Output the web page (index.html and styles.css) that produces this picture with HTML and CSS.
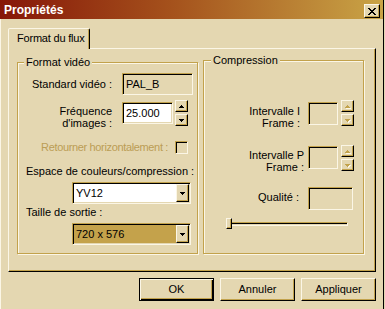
FILE: index.html
```html
<!DOCTYPE html>
<html lang="fr">
<head>
    <meta charset="UTF-8">
    <title>Propriétés</title>
    <link rel="stylesheet" href="styles.css">
</head>
<body>
    <div class="window">
        <div class="titlebar">
            <span class="title">Propriétés</span>
            <button class="close" aria-label="Fermer">
                <svg width="8" height="7" viewBox="0 0 8 7"><path d="M0 0h2v1h1v1h2V1h1V0h2v1H7v1H6v1H5v1h1v1h1v1h1v1H6V6H5V5H3v1H2v1H0V6h1V5h1V4h1V3H2V2H1V1H0z"/></svg>
            </button>
        </div>

        <div class="content">
            <div class="tabs">
                <div class="tab">Format du flux</div>
            </div>

            <div class="panel">
                <div class="group video">
                    <span class="legend">Format vidéo</span>

                    <div class="row row-std">
                        <span class="label lbl-std">Standard vidéo :</span>
                        <span class="sunken field-std">PAL_B</span>
                    </div>

                    <div class="row row-fps">
                        <span class="label lbl-fps">Fréquence<br>d'images :</span>
                        <span class="sunken field-fps">25.000</span>
                        <div class="spin">
                            <span class="raised spin-btn"><svg width="5" height="3"><path d="M2 0h1v1h1v1h1v1H0V2h1V1h1z"/></svg></span>
                            <span class="raised spin-btn"><svg width="5" height="3"><path d="M0 0h5v1H4v1H3v1H2V2H1V1H0z"/></svg></span>
                        </div>
                    </div>

                    <div class="row row-flip">
                        <span class="label lbl-flip">Retourner horizontalement :</span>
                        <span class="sunken check"></span>
                    </div>

                    <div class="label lbl-space">Espace de couleurs/compression :</div>
                    <div class="sunken combo combo-space">
                        <span class="combo-text">YV12</span>
                        <span class="raised combo-btn"><svg width="5" height="3"><path d="M0 0h5v1H4v1H3v1H2V2H1V1H0z"/></svg></span>
                    </div>

                    <div class="label lbl-size">Taille de sortie :</div>
                    <div class="sunken combo combo-size">
                        <span class="combo-text">720 x 576</span>
                        <span class="raised combo-btn"><svg width="5" height="3"><path d="M0 0h5v1H4v1H3v1H2V2H1V1H0z"/></svg></span>
                    </div>
                </div>

                <div class="group compression">
                    <span class="legend">Compression</span>

                    <div class="row row-iframe">
                        <span class="label lbl-iframe">Intervalle I<br>Frame :</span>
                        <span class="sunken field-small"></span>
                        <div class="spin disabled">
                            <span class="raised spin-btn"><svg width="5" height="3"><path d="M2 0h1v1h1v1h1v1H0V2h1V1h1z"/></svg></span>
                            <span class="raised spin-btn"><svg width="5" height="3"><path d="M0 0h5v1H4v1H3v1H2V2H1V1H0z"/></svg></span>
                        </div>
                    </div>

                    <div class="row row-pframe">
                        <span class="label lbl-pframe">Intervalle P<br>Frame :</span>
                        <span class="sunken field-small"></span>
                        <div class="spin disabled">
                            <span class="raised spin-btn"><svg width="5" height="3"><path d="M2 0h1v1h1v1h1v1H0V2h1V1h1z"/></svg></span>
                            <span class="raised spin-btn"><svg width="5" height="3"><path d="M0 0h5v1H4v1H3v1H2V2H1V1H0z"/></svg></span>
                        </div>
                    </div>

                    <div class="row row-quality">
                        <span class="label lbl-quality">Qualité :</span>
                        <span class="sunken field-quality"></span>
                    </div>

                    <div class="slider">
                        <span class="track"></span>
                        <span class="raised thumb"></span>
                    </div>
                </div>
            </div>

            <div class="actions">
                <button class="btn default">OK</button>
                <button class="btn">Annuler</button>
                <button class="btn">Appliquer</button>
            </div>
        </div>
    </div>
</body>
</html>
```

FILE: styles.css
```css
body {
    margin: 0;
    background: #e4d7b1;
    font-family: "Liberation Sans", Arial, sans-serif;
    font-size: 11px;
    line-height: 13px;
    color: #000;
}
.window {
    width: 384px;
    height: 309px;
    box-sizing: border-box;
    border-right: 1px solid #000;
    display: flex;
    flex-direction: column;
}

/* title bar */
.titlebar {
    height: 19px;
    flex: none;
    display: flex;
    align-items: flex-start;
    justify-content: space-between;
    background: linear-gradient(to right, #861608, #a5521c 45%, #c9a446);
    color: #fff;
}
.title {
    font-weight: bold;
    font-size: 12px;
    line-height: 17px;
    padding: 2px 0 0 4px;
}
.close {
    width: 16px;
    height: 14px;
    margin: 4px 3px 0 0;
    padding: 0;
    box-sizing: border-box;
    background: #e4d7b1;
    border: 1px solid;
    border-color: #fbf6e6 #000 #000 #fbf6e6;
    box-shadow: inset -1px -1px #c2a24c;
    display: flex;
    align-items: center;
    justify-content: center;
}

/* 3D borders */
.raised {
    box-sizing: border-box;
    background: #e4d7b1;
    border: 1px solid;
    border-color: #fbf6e6 #000 #000 #fbf6e6;
    box-shadow: inset -1px -1px #c2a24c;
}
.sunken {
    box-sizing: border-box;
    border: 1px solid;
    border-color: #c2a24c #fbf6e6 #fbf6e6 #c2a24c;
    box-shadow: inset 1px 1px #000, inset -1px -1px #e4d7b1;
}

.content {
    flex: 1;
    border-left: 1px solid #fbf6e6;
    padding: 9px 7px 0 7px;
}

/* tab control */
.tabs {
    display: flex;
    height: 20px;
}
.tab {
    width: 82px;
    height: 21px;
    box-sizing: border-box;
    padding: 3px 0 0 8px;
    letter-spacing: -0.2px;
    background: #e4d7b1;
    border: 1px solid;
    border-bottom: none;
    border-color: #fbf6e6 #000 transparent #fbf6e6;
    border-radius: 2px 2px 0 0;
    box-shadow: inset -1px 0 #c2a24c;
    position: relative;
    z-index: 1;
}
.panel {
    width: 368px;
    height: 224px;
    box-sizing: border-box;
    padding-left: 8px;
    border: 1px solid;
    border-color: #fbf6e6 #000 #000 #fbf6e6;
    box-shadow: inset -1px -1px #c2a24c;
    display: flex;
    align-items: flex-start;
    gap: 5px;
}

/* group boxes */
.group {
    box-sizing: border-box;
    border: 1px solid #c2a24c;
    box-shadow: inset 1px 1px #fbf6e6, 1px 1px #fbf6e6;
}
.video {
    width: 181px;
    height: 192px;
    margin-top: 13px;
}
.compression {
    width: 161px;
    height: 194px;
    margin-top: 11px;
}
.legend {
    display: block;
    width: fit-content;
    margin: -7px 0 0 6px;
    padding: 0 2px;
    background: #e4d7b1;
}
.compression .legend {
    margin-left: 7px;
}

.row {
    display: flex;
    align-items: flex-start;
}
.label {
    white-space: nowrap;
}

/* format video */
.row-std {
    margin-top: 4px;
}
.lbl-std {
    width: 94px;
    text-align: right;
    line-height: 22px;
}
.field-std {
    width: 71px;
    height: 22px;
    margin-left: 10px;
    padding: 0 3px;
    line-height: 20px;
}
.row-fps {
    margin-top: 5px;
}
.lbl-fps {
    width: 94px;
    margin-top: 5px;
    text-align: right;
    line-height: 12px;
}
.field-fps {
    width: 51px;
    height: 22px;
    margin: 2px 0 0 10px;
    padding: 0 3px;
    line-height: 20px;
    background: #fff;
}
.spin {
    display: flex;
    flex-direction: column;
    gap: 2px;
    margin-left: 2px;
}
.row-iframe .spin,
.row-pframe .spin {
    margin-left: 3px;
}
.spin-btn {
    width: 13px;
    height: 12px;
    display: flex;
    align-items: center;
    justify-content: center;
}
.spin.disabled svg {
    fill: #c2a24c;
    filter: drop-shadow(1px 1px 0 #fbf6e6);
}
.row-flip {
    margin-top: 12px;
}
.lbl-flip {
    width: 150px;
    text-align: right;
    letter-spacing: -0.35px;
    color: #bb9d55;
}
.check {
    width: 13px;
    height: 13px;
    margin-left: 7px;
}
.lbl-space {
    margin: 11px 0 0 8px;
}
.lbl-size {
    margin: 2px 0 0 8px;
}
.combo {
    display: flex;
    width: 119px;
    height: 22px;
    margin: 4px 0 0 54px;
    padding: 1px;
    background: #fff;
}
.combo-size {
    background: #c4a24b;
}
.combo-text {
    flex: 1;
    padding-left: 2px;
    line-height: 18px;
}
.combo-btn {
    width: 13px;
    height: 18px;
    display: flex;
    align-items: center;
    justify-content: center;
}

/* compression */
.row-iframe {
    margin-top: 33px;
}
.lbl-iframe {
    width: 96px;
    margin-top: 5px;
    text-align: right;
    line-height: 12px;
}
.field-small {
    width: 30px;
    height: 23px;
    margin: 2px 0 0 8px;
}
.row-pframe {
    margin-top: 16px;
}
.lbl-pframe {
    width: 100px;
    margin-top: 4px;
    text-align: right;
    line-height: 12px;
}
.row-pframe .field-small {
    margin: 1px 0 0 4px;
}
.row-quality {
    margin-top: 14px;
}
.lbl-quality {
    width: 95px;
    margin-top: 4px;
    text-align: right;
}
.field-quality {
    width: 45px;
    height: 23px;
    margin-left: 9px;
}
.slider {
    display: grid;
    width: 122px;
    height: 11px;
    margin: 8px 0 0 22px;
}
.track {
    grid-area: 1 / 1;
    align-self: center;
    height: 4px;
    box-sizing: border-box;
    border: 1px solid;
    border-color: #c2a24c #fbf6e6 #fbf6e6 #c2a24c;
    box-shadow: inset 1px 1px #000;
}
.thumb {
    grid-area: 1 / 1;
    justify-self: start;
    width: 6px;
    height: 11px;
}

/* dialog buttons */
.actions {
    display: flex;
    justify-content: flex-end;
    gap: 6px;
    margin-top: 6px;
}
.btn {
    width: 75px;
    height: 23px;
    padding: 0;
    box-sizing: border-box;
    font: inherit;
    color: #000;
    background: #e4d7b1;
    border: 1px solid;
    border-color: #fbf6e6 #000 #000 #fbf6e6;
    box-shadow: inset -1px -1px #c2a24c;
}
.btn.default {
    border-color: #000;
    box-shadow: inset 1px 1px #fbf6e6, inset -1px -1px #000, inset -2px -2px #c2a24c;
}
```
